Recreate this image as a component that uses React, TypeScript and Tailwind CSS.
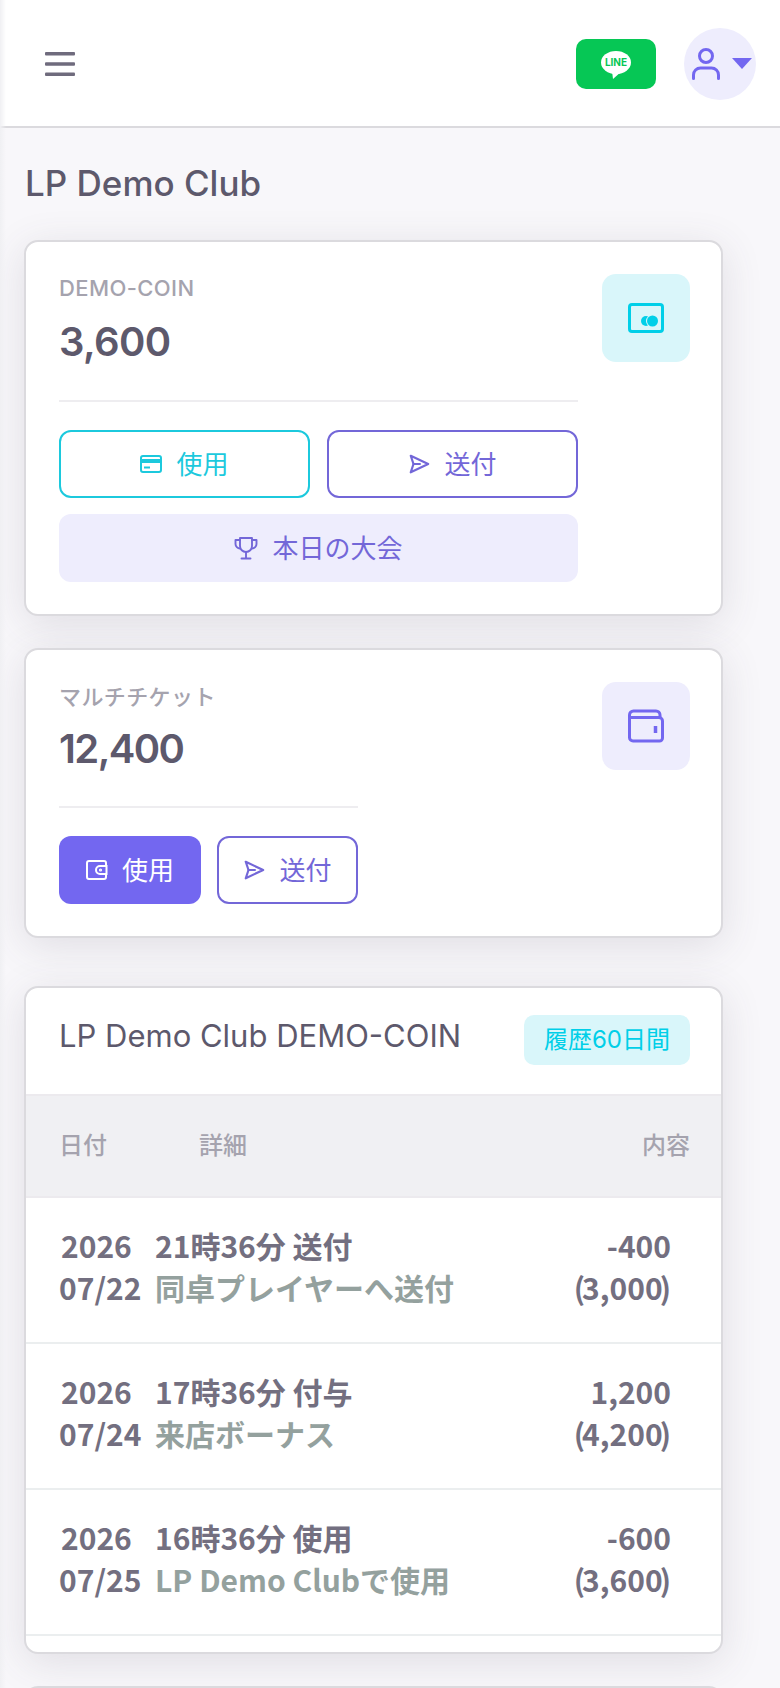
import React from "react";

const sans = "[font-family:Inter,'Noto_Sans_CJK_JP',sans-serif]";

function SendIcon({ className }: { className: string }) {
  return (
    <svg viewBox="0 0 24 24" fill="none" stroke="currentColor" strokeWidth="2.4" strokeLinejoin="round" strokeLinecap="round" className={className}>
      <path d="M3 3 L22 12 L3 21 L6 12 Z" />
      <path d="M6 12 H13" />
    </svg>
  );
}

function CardIcon({ className }: { className: string }) {
  return (
    <svg viewBox="0 0 22 18" fill="none" className={className}>
      <rect x="1" y="1" width="20" height="16" rx="2" stroke="currentColor" strokeWidth="2" />
      <rect x="1" y="4" width="20" height="4" fill="currentColor" />
      <rect x="4" y="11.5" width="6" height="2" fill="currentColor" />
    </svg>
  );
}

function SmallWallet({ className }: { className: string }) {
  return (
    <svg viewBox="0 0 22 20" fill="none" stroke="currentColor" strokeWidth="2" className={className}>
      <path d="M20 6 V3 a2 2 0 0 0 -2 -2 H3 a2 2 0 0 0 -2 2 V17 a2 2 0 0 0 2 2 H18 a2 2 0 0 0 2 -2 V14" />
      <path d="M20.5 6 H14 a4 4 0 0 0 0 8 H20.5 Z" />
      <circle cx="14.5" cy="10" r="0.6" fill="currentColor" />
    </svg>
  );
}

function Trophy({ className }: { className: string }) {
  return (
    <svg viewBox="0 0 24 24" fill="none" stroke="currentColor" strokeWidth="1.9" strokeLinecap="round" strokeLinejoin="round" className={className}>
      <path d="M6 2 H18 V10 a6 6 0 0 1 -12 0 Z" />
      <path d="M6 4 H1.5 V8 a4.5 4.5 0 0 0 4.5 4.5" />
      <path d="M18 4 H22.5 V8 a4.5 4.5 0 0 1 -4.5 4.5" />
      <path d="M12 16 V22" />
      <path d="M7.5 22.5 H16.5" />
    </svg>
  );
}

function Btn({
  className,
  icon,
  label,
}: {
  className: string;
  icon: React.ReactNode;
  label: string;
}) {
  return (
    <button className={`flex h-[68px] items-center justify-center rounded-[12px] text-[26px] ${className}`}>
      {icon}
      <span>{label}</span>
    </button>
  );
}

const rows = [
  { y: "2026", d: "07/22", a: "21時36分 送付", b: "同卓プレイヤーへ送付", v: "-400", t: "3,000" },
  { y: "2026", d: "07/24", a: "17時36分 付与", b: "来店ボーナス", v: "1,200", t: "4,200" },
  { y: "2026", d: "07/25", a: "16時36分 使用", b: "LP Demo Clubで使用", v: "-600", t: "3,600" },
];

export default function App() {
  return (
    <div className={`relative h-[1688px] w-[780px] overflow-hidden bg-[#f8f7fa] ${sans} text-[#5d596c]`}>
      <div className="absolute left-0 top-0 z-10 h-full w-[6px] bg-gradient-to-r from-[#f0f0f3] to-transparent" />
      <header className="flex h-[128px] items-center border-b-2 border-[#dbdade] bg-white pl-[45px] pr-[24px] pt-[2px]">
        <svg viewBox="0 0 30 24" className="h-[24px] w-[30px]" fill="#6f6b7d">
          <rect x="0" y="0" width="30" height="3.4" rx="1" />
          <rect x="0" y="10.3" width="30" height="3.4" rx="1" />
          <rect x="0" y="20.6" width="30" height="3.4" rx="1" />
        </svg>
        <div className="ml-auto flex h-[50px] w-[80px] items-center justify-center rounded-[10px] bg-[#06c755]">
          <div className="relative mb-[4px] flex h-[23px] w-[30px] items-center justify-center rounded-[50%] bg-white">
            <span className="text-[10px] font-bold leading-none text-[#06c755]">LINE</span>
            <svg viewBox="0 0 10 8" className="absolute left-[11px] top-[21px] h-[7px] w-[9px]" fill="#fff">
              <path d="M0 0 H10 L1 8 Z" />
            </svg>
          </div>
        </div>
        <div className="ml-[28px] flex h-[72px] w-[72px] items-center rounded-full bg-[#eeedfd] pl-[8px]">
          <svg viewBox="0 0 28 32" className="h-[32px] w-[28px]" fill="none" stroke="#7367f0" strokeWidth="3" strokeLinecap="round">
            <circle cx="14" cy="8" r="6.5" />
            <path d="M1.5 30.5 V27 a7 7 0 0 1 7 -7 H19.5 a7 7 0 0 1 7 7 V30.5" />
          </svg>
          <svg viewBox="0 0 20 11" className="ml-[12px] mt-[-2px] h-[11px] w-[20px]" fill="#7367f0">
            <path d="M0 0 H20 L10 11 Z" />
          </svg>
        </div>
      </header>

      <main className="pl-[24px]">
        <h1 className="mt-[33px] h-[45px] pl-[1px] text-[35px] font-medium leading-[44px]">LP Demo Club</h1>

        <section className="mt-[34px] h-[376px] w-[699px] rounded-[14px] border-2 border-[#dbdade] bg-white pl-[33px] pr-[31px] pt-[32px] shadow-[0_8px_40px_rgba(75,70,92,0.14)]">
          <div className="flex gap-[24px]">
            <div className="w-[519px]">
              <div className="mt-[1px] text-[22px] font-medium leading-[26px] tracking-[0.4px] text-[#a5a3ae]">DEMO-COIN</div>
              <div className="mt-[14px] text-[40px] font-semibold leading-[54px] tracking-[-0.6px]">3,600</div>
              <div className="mt-[31px] h-[2px] bg-[#eeedf0]" />
              <div className="mt-[28px] flex gap-[17px]">
                <Btn
                  className="flex-1 border-2 border-[#1cc9dd] bg-white text-[#1cc9dd]"
                  icon={<CardIcon className="mr-[14px] h-[18px] w-[22px]" />}
                  label="使用"
                />
                <Btn
                  className="flex-1 border-2 border-[#7367d8] bg-white text-[#7367d8]"
                  icon={<SendIcon className="mr-[14px] h-[22px] w-[22px]" />}
                  label="送付"
                />
              </div>
              <Btn
                className="mt-[16px] w-full bg-[#eeedfd] text-[#7367d8]"
                icon={<Trophy className="mr-[14px] h-[24px] w-[24px]" />}
                label="本日の大会"
              />
            </div>
            <div className="flex h-[88px] w-[88px] items-center justify-center rounded-[14px] bg-[#d9f6fa]">
              <svg viewBox="0 0 36 30" className="h-[30px] w-[36px]" fill="none">
                <rect x="1.5" y="1.5" width="33" height="27" rx="2.5" stroke="#00cfe8" strokeWidth="3" />
                <circle cx="18" cy="18" r="5" fill="#00cfe8" />
                <circle cx="24.5" cy="18" r="6.5" fill="#d9f6fa" />
                <circle cx="24.5" cy="18" r="5.5" fill="#00cfe8" />
              </svg>
            </div>
          </div>
        </section>

        <section className="mt-[32px] h-[290px] w-[699px] rounded-[14px] border-2 border-[#dbdade] bg-white pl-[33px] pr-[31px] pt-[32px] shadow-[0_8px_40px_rgba(75,70,92,0.14)]">
          <div className="flex justify-between">
            <div className="w-[299px]">
              <div className="mt-[2px] text-[22px] font-medium leading-[26px] tracking-[0.4px] text-[#a5a3ae]">マルチチケット</div>
              <div className="mt-[12px] text-[40px] font-semibold leading-[54px] tracking-[-1.6px]">12,400</div>
              <div className="mt-[30px] h-[2px] bg-[#eeedf0]" />
              <div className="mt-[28px] flex gap-[16px]">
                <Btn
                  className="w-[142px] bg-[#7367f0] text-white"
                  icon={<SmallWallet className="mr-[14px] h-[20px] w-[22px]" />}
                  label="使用"
                />
                <Btn
                  className="w-[141px] border-2 border-[#7367d8] bg-white text-[#7367d8]"
                  icon={<SendIcon className="mr-[14px] h-[22px] w-[22px]" />}
                  label="送付"
                />
              </div>
            </div>
            <div className="flex h-[88px] w-[88px] items-center justify-center rounded-[14px] bg-[#eeedfd]">
              <svg viewBox="0 0 36 34" className="h-[34px] w-[36px]" fill="none" stroke="#7367f0" strokeWidth="3" strokeLinejoin="round">
                <path d="M1.5 10 V6 a4 4 0 0 1 4 -4 H28 a4 4 0 0 1 4 4 V8.5" />
                <path d="M1.5 8.5 H31 a3.5 3.5 0 0 1 3.5 3.5 V29 a3 3 0 0 1 -3 3 H5 a3.5 3.5 0 0 1 -3.5 -3.5 Z" />
                <path d="M27.5 17 V24" strokeWidth="3.5" />
              </svg>
            </div>
          </div>
        </section>

        <section className="mt-[48px] h-[668px] w-[699px] overflow-hidden rounded-[14px] border-2 border-[#dbdade] bg-white shadow-[0_8px_40px_rgba(75,70,92,0.14)]">
          <div className="flex h-[106px] items-start justify-between pl-[33px] pr-[31px] pt-[27px]">
            <div className="text-[31px] leading-[42px]">LP Demo Club DEMO-COIN</div>
            <div className="flex h-[50px] w-[166px] items-center justify-center rounded-[10px] bg-[#d9f6fa] text-[24px] text-[#00cfe8]">
              履歴60日間
            </div>
          </div>
          <div className="flex h-[104px] items-center justify-between border-y-2 border-[#eceaee] bg-[#f0f0f3] pl-[33px] pr-[31px] text-[24px] font-medium text-[#a5a3ae]">
            <div className="flex gap-[92px]">
              <span>日付</span>
              <span>詳細</span>
            </div>
            <span>内容</span>
          </div>
          {rows.map((r) => (
            <div
              key={r.d}
              className="flex h-[146px] items-center border-b-2 border-[#ebeeef] pb-[8px] pl-[33px] pr-[50px] text-[30px] font-semibold leading-[42px] text-[#736f80] [font-family:'Noto_Sans_CJK_JP',sans-serif]"
            >
              <div className="w-[96px] shrink-0">
                <div className="pl-[2px]">{r.y}</div>
                <div>{r.d}</div>
              </div>
              <div className="flex-1">
                <div>{r.a}</div>
                <div className="text-[#94a19e]">{r.b}</div>
              </div>
              <div className="text-right">
                <div>{r.v}</div>
                <div>
                  <span className="tracking-[-3px]">(</span>
                  <span>{r.t}</span>
                  <span className="ml-[-3px]">)</span>
                </div>
              </div>
            </div>
          ))}
        </section>

        <div className="mt-[32px] h-[100px] w-[699px] rounded-[14px] border-2 border-[#dbdade] bg-white" />
      </main>
    </div>
  );
}
